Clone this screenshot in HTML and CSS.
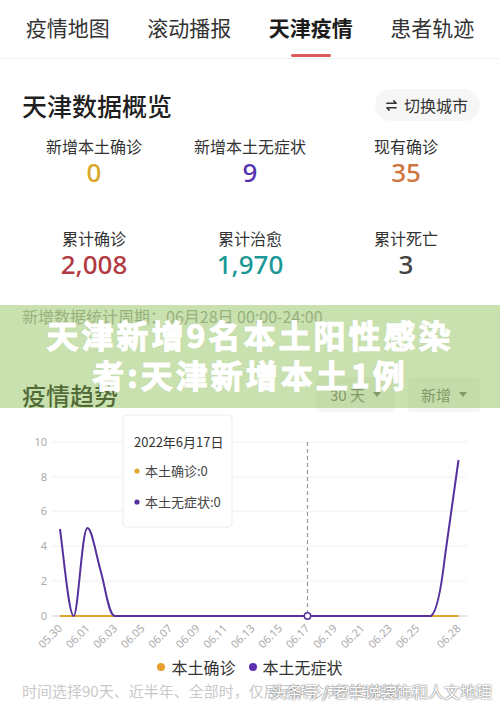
FILE: index.html
```html
<!DOCTYPE html>
<html lang="zh-CN">
<head>
  <meta charset="utf-8">
  <title>天津疫情</title>
  <meta name="viewport" content="width=device-width, initial-scale=1">
  <link rel="stylesheet" href="styles.css">
</head>
<body>
  <nav class="tabs">
    <a class="tab">疫情地图</a>
    <a class="tab">滚动播报</a>
    <a class="tab active">天津疫情</a>
    <a class="tab">患者轨迹</a>
  </nav>

  <section class="overview">
    <div class="section-head">
      <h2>天津数据概览</h2>
      <button class="switch">
        <svg viewBox="0 0 14 14" fill="none" stroke="currentColor" stroke-width="1.6" stroke-linecap="round" stroke-linejoin="round">
          <path d="M2 4.5h10L9.5 2" />
          <path d="M12 9.5H2l2.5 2.5" />
        </svg>
        切换城市
      </button>
    </div>
    <div class="stats">
      <div class="stat">
        <div class="label">新增本土确诊</div>
        <div class="value yellow">0</div>
      </div>
      <div class="stat">
        <div class="label">新增本土无症状</div>
        <div class="value purple">9</div>
      </div>
      <div class="stat">
        <div class="label">现有确诊</div>
        <div class="value orange">35</div>
      </div>
      <div class="stat">
        <div class="label">累计确诊</div>
        <div class="value red">2,008</div>
      </div>
      <div class="stat">
        <div class="label">累计治愈</div>
        <div class="value teal">1,970</div>
      </div>
      <div class="stat">
        <div class="label">累计死亡</div>
        <div class="value gray">3</div>
      </div>
    </div>
    <p class="period">新增数据统计周期：06月28日 00:00-24:00</p>
  </section>

  <section class="trend">
    <div class="section-head">
      <h2>疫情趋势</h2>
      <div class="filters">
        <span class="pill pill-days">30 天 <i class="caret"></i></span>
        <span class="pill">新增 <i class="caret"></i></span>
      </div>
    </div>

    <svg class="chart" viewBox="0 415 500 240" width="500" height="240">
      <g class="grid">
        <line x1="52" y1="443" x2="467" y2="443" />
        <line x1="52" y1="478" x2="467" y2="478" />
        <line x1="52" y1="512" x2="467" y2="512" />
        <line x1="52" y1="547" x2="467" y2="547" />
        <line x1="52" y1="582" x2="467" y2="582" />
      </g>
      <line class="axis" x1="52" y1="617" x2="467" y2="617" />
      <g class="y-labels">
        <text x="47" y="447">10</text>
        <text x="47" y="482">8</text>
        <text x="47" y="516">6</text>
        <text x="47" y="551">4</text>
        <text x="47" y="586">2</text>
        <text x="47" y="621">0</text>
      </g>
      <g class="x-labels" id="x-labels"></g>

      <line class="cursor" x1="307.5" y1="443" x2="307.5" y2="617" />
      <path class="line-yellow" d="M60 617H458.5" />
      <path class="line-purple" d="M60 530C64 560 69 617 73.7 617C78 617 82 529 87.4 529C92 529 96 556 101 573C106 592 109 617 114.9 617L431 617C437 613 441 592 445 557L458.5 461" />
      <circle class="marker" cx="307.5" cy="617" r="3.2" />

      <g class="tooltip">
        <rect x="123" y="416" width="109" height="112" rx="4" />
        <text class="tip-title" x="134" y="448">2022年6月17日</text>
        <circle cx="137" cy="472" r="2.6" fill="#e2a52e" />
        <text x="145" y="477">本土确诊:0</text>
        <circle cx="137" cy="503" r="2.6" fill="#57309f" />
        <text x="145" y="508">本土无症状:0</text>
      </g>
    </svg>

    <div class="legend">
      <span class="key"><i class="dot yellow-bg"></i>本土确诊</span>
      <span class="key"><i class="dot purple-bg"></i>本土无症状</span>
    </div>
    <p class="note">时间选择90天、近半年、全部时，仅展示确诊病例趋势图</p>
  </section>

  <div class="banner">天津新增9名本土阳性感染<br>者:天津新增本土1例</div>
  <div class="watermark">头条号 / 老羊说装饰和人文地理</div>

  <script>
    // x axis: one tick every two days from 05.30, plus the last day
    const labels = ["05.30", "06.01", "06.03", "06.05", "06.07", "06.09", "06.11",
      "06.13", "06.15", "06.17", "06.19", "06.21", "06.23", "06.25", "06.28"];
    const days = [0, 2, 4, 6, 8, 10, 12, 14, 16, 18, 20, 22, 24, 26, 29];
    const step = (458.5 - 60) / 29;
    const g = document.getElementById("x-labels");
    labels.forEach((txt, i) => {
      const x = 60 + days[i] * step + 3;
      const y = 630;
      const t = document.createElementNS("http://www.w3.org/2000/svg", "text");
      t.setAttribute("x", x.toFixed(1));
      t.setAttribute("y", y);
      t.setAttribute("transform", `rotate(-45 ${x.toFixed(1)} ${y})`);
      t.textContent = txt;
      g.appendChild(t);
    });
  </script>
</body>
</html>
```

FILE: styles.css
```css
* {
  box-sizing: border-box;
}
body {
  margin: 0;
  width: 500px;
  height: 715px;
  overflow: hidden;
  position: relative;
  background: #fff;
  color: #222;
  font-family: "Noto Sans CJK SC", "Noto Sans", sans-serif;
}
h2 {
  margin: 0;
  font-size: 25px;
  font-weight: 500;
  color: #1f1f1f;
  line-height: 34px;
}

/* tabs */
.tabs {
  display: flex;
  height: 59px;
  padding: 0 7px;
  border-bottom: 1px solid #f2f2f2;
}
.tab {
  flex: 1;
  position: relative;
  text-align: center;
  font-size: 21px;
  line-height: 54px;
  color: #333;
}
.tab.active {
  font-weight: 700;
  color: #1c1c1c;
}
.tab.active::after {
  content: "";
  position: absolute;
  left: 50%;
  bottom: 1px;
  width: 40px;
  height: 3px;
  margin-left: -20px;
  border-radius: 2px;
  background: #e05a5a;
}

/* overview */
.overview {
  padding-top: 29px;
}
.section-head {
  display: flex;
  align-items: center;
  justify-content: space-between;
  padding: 0 20px 0 22px;
  height: 34px;
}
.switch {
  display: flex;
  align-items: center;
  gap: 6px;
  height: 32px;
  padding: 0 12px 0 10px;
  border: none;
  border-radius: 16px;
  background: #f6f6f6;
  color: #333;
  font: inherit;
  font-size: 16px;
}
.switch svg {
  width: 13px;
  height: 13px;
}
.stats {
  display: grid;
  grid-template-columns: repeat(3, 1fr);
  row-gap: 40px;
  padding: 0 16px;
  margin-top: 13px;
  text-align: center;
}
.label {
  font-size: 16px;
  line-height: 22px;
  color: #333;
}
.value {
  font-family: "Noto Sans", sans-serif;
  font-size: 26px;
  line-height: 30px;
  font-weight: 500;
}
.yellow { color: #d9a82a; }
.purple { color: #5633b0; }
.orange { color: #cf7540; }
.red { color: #b23a42; }
.teal { color: #1b9896; }
.gray { color: #444; }
.period {
  margin: 27px 22px 0;
  font-size: 16px;
  line-height: 20px;
  color: #a3a3a3;
}

/* trend */
.trend {
  margin-top: 51px;
}
.trend .section-head {
  height: 35px;
}
.trend h2 {
  font-size: 24px;
}
.filters {
  display: flex;
  gap: 13px;
}
.pill {
  display: flex;
  align-items: center;
  gap: 8px;
  height: 35px;
  padding: 0 13px;
  border-radius: 4px;
  background: #f6f6f6;
  font-size: 15px;
  color: #777;
}
.pill-days {
  width: 79px;
  justify-content: center;
}
.caret {
  width: 0;
  height: 0;
  border-left: 4px solid transparent;
  border-right: 4px solid transparent;
  border-top: 5px solid #777;
}
.chart {
  display: block;
  margin-top: 2px;
  font-family: "Noto Sans", sans-serif;
}
.grid line {
  stroke: #f0f0f0;
  stroke-width: 1;
}
.axis {
  stroke: #ccc;
  stroke-width: 1;
}
.y-labels text {
  font-size: 11px;
  fill: #aaa;
  text-anchor: end;
}
.x-labels text {
  font-size: 11px;
  fill: #aaa;
  text-anchor: end;
}
.cursor {
  stroke: #999;
  stroke-width: 1.2;
  stroke-dasharray: 4 3;
}
.line-yellow {
  fill: none;
  stroke: #e2a52e;
  stroke-width: 2;
}
.line-purple {
  fill: none;
  stroke: #57309f;
  stroke-width: 2;
  stroke-linejoin: round;
}
.marker {
  fill: #fff;
  stroke: #57309f;
  stroke-width: 1.5;
}
.tooltip rect {
  fill: #fff;
  stroke: #ececec;
  stroke-width: 1;
}
.tooltip text {
  font-family: "Noto Sans CJK SC", sans-serif;
  font-size: 13px;
  fill: #444;
}
.tooltip .tip-title {
  fill: #333;
}
.legend {
  display: flex;
  justify-content: center;
  gap: 13px;
  margin-top: 1px;
  font-size: 16px;
  line-height: 24px;
  color: #333;
}
.key {
  display: flex;
  align-items: center;
  gap: 6px;
}
.dot {
  width: 8px;
  height: 8px;
  border-radius: 50%;
}
.yellow-bg { background: #e8a030; }
.purple-bg { background: #5a2fb0; }
.note {
  margin: 1px 0 0 22px;
  font-size: 15px;
  line-height: 22px;
  color: #c9c9c9;
  white-space: nowrap;
}

/* overlays */
.banner {
  position: absolute;
  left: 0;
  top: 305px;
  width: 500px;
  height: 103px;
  padding-top: 9px;
  background: rgba(140, 192, 84, 0.47);
  color: #fff;
  text-align: center;
  font-size: 32px;
  font-weight: 700;
  line-height: 40px;
  letter-spacing: 3px;
  -webkit-text-stroke: 1.2px #fff;
  text-shadow: 0 0 2px rgba(0, 0, 0, 0.12);
}
.watermark {
  position: absolute;
  right: 8px;
  top: 680px;
  font-size: 16px;
  line-height: 22px;
  color: #fff;
  text-shadow: 0 0 1px #666, 0 0 2px #888;
  white-space: nowrap;
}
```
